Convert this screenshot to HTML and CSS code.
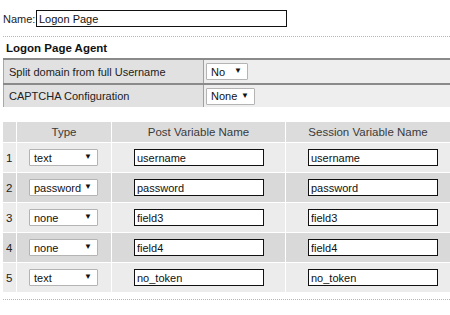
FILE: index.html
```html
<!DOCTYPE html>
<html lang="en">
<head>
  <meta charset="UTF-8" />
  <title>Logon Page</title>
  <link rel="stylesheet" href="styles.css">
</head>
<body>

  <div class="name-row">
    <label for="pageName">Name:</label>
    <input type="text" id="pageName" class="name-input" value="Logon Page" />
  </div>
  <div class="dots"></div>

  <h3>Logon Page Agent</h3>
  <table class="agent">
    <tr>
      <td class="label">Split domain from full Username</td>
      <td class="value"><div class="select sel-no"><span>No</span><span class="arrow">&#9660;</span></div></td>
    </tr>
    <tr>
      <td class="label">CAPTCHA Configuration</td>
      <td class="value"><div class="select sel-none"><span>None</span><span class="arrow">&#9660;</span></div></td>
    </tr>
  </table>

  <table class="fields">
    <tr class="head">
      <th class="num"></th>
      <th class="type">Type</th>
      <th class="post">Post Variable Name</th>
      <th class="sess">Session Variable Name</th>
    </tr>
    <tr class="light">
      <td class="num">1</td>
      <td><div class="select sel-type"><span>text</span><span class="arrow">&#9660;</span></div></td>
      <td><input type="text" class="var" value="username" /></td>
      <td><input type="text" class="var" value="username" /></td>
    </tr>
    <tr class="dark">
      <td class="num">2</td>
      <td><div class="select sel-type"><span>password</span><span class="arrow">&#9660;</span></div></td>
      <td><input type="text" class="var" value="password" /></td>
      <td><input type="text" class="var" value="password" /></td>
    </tr>
    <tr class="light">
      <td class="num">3</td>
      <td><div class="select sel-type"><span>none</span><span class="arrow">&#9660;</span></div></td>
      <td><input type="text" class="var" value="field3" /></td>
      <td><input type="text" class="var" value="field3" /></td>
    </tr>
    <tr class="dark">
      <td class="num">4</td>
      <td><div class="select sel-type"><span>none</span><span class="arrow">&#9660;</span></div></td>
      <td><input type="text" class="var" value="field4" /></td>
      <td><input type="text" class="var" value="field4" /></td>
    </tr>
    <tr class="light">
      <td class="num">5</td>
      <td><div class="select sel-type"><span>text</span><span class="arrow">&#9660;</span></div></td>
      <td><input type="text" class="var" value="no_token" /></td>
      <td><input type="text" class="var" value="no_token" /></td>
    </tr>
  </table>
  <div class="dots bottom"></div>

</body>
</html>
```

FILE: styles.css
```css
body {
  font-family: 'Liberation Sans', Arial, sans-serif;
  font-size: 11px;
  color: #222;
  background: white;
  margin: 0;
  width: 450px;
  overflow: hidden;
}

input {
  font-family: 'Liberation Sans', Arial, sans-serif;
  font-size: 11px;
  color: #111;
  box-sizing: border-box;
  height: 17px;
  border: 1px solid #111;
  padding: 0 2px;
  margin: 0;
  outline: none;
  background: white;
}

.name-row {
  display: flex;
  align-items: center;
  padding: 10px 0 0 3px;
}

.name-row label {
  width: 33px;
}

.name-input {
  width: 251px;
}

.dots {
  margin: 9px 0 0 3px;
  border-top: 1px dotted #b5b5b5;
}

.dots.bottom {
  margin-top: 6px;
}

h3 {
  margin: 0 0 3px 0;
  padding: 4px 0 0 6px;
  font-size: 11.5px;
  line-height: 14px;
  font-weight: bold;
  color: #111;
}

.agent {
  width: 447px;
  margin-left: 3px;
  border-collapse: collapse;
  border-left: 1px solid #a8a8a8;
}

.agent td {
  border-top: 2px solid #8a8a8a;
  height: 23px;
  padding: 0;
}

.agent tr + tr td {
  height: 22px;
}

.agent .label {
  width: 194px;
  padding-left: 5px;
  background: #e1e1e1;
  border-right: 1px solid #a0a0a0;
}

.agent .value {
  padding-left: 2px;
  background: #eeeeee;
}

.select {
  display: flex;
  align-items: center;
  justify-content: space-between;
  box-sizing: border-box;
  height: 17px;
  padding: 0 5px 0 4px;
  background: white;
  border: 1px solid #b4b4b4;
  border-radius: 1px;
  color: #111;
  font-size: 11px;
}

.select .arrow {
  font-size: 8px;
  color: #111;
  padding-bottom: 2px;
}

.sel-no {
  width: 42px;
}

.sel-none {
  width: 49px;
}

.sel-type {
  width: 69px;
}

.fields {
  width: 449px;
  margin: 14px 0 0 2px;
  border-collapse: separate;
  border-spacing: 1px;
}

.fields th {
  background: #dcdcdc;
  height: 20px;
  font-weight: normal;
  font-size: 11.5px;
  color: #3a3a3a;
  padding: 0;
}

.fields td {
  height: 29px;
  padding: 0 0 0 22px;
}

.fields .num {
  width: 10px;
  padding: 0 0 0 3px;
  font-size: 11.5px;
  color: #222;
}

.fields td:nth-child(2) {
  padding-left: 12px;
}

.fields th.type {
  width: 94px;
}

.fields th.post {
  width: 173px;
}

.light td {
  background: #ececec;
}

.dark td {
  background: #d9d9d9;
}

.var {
  width: 130px;
}
```
